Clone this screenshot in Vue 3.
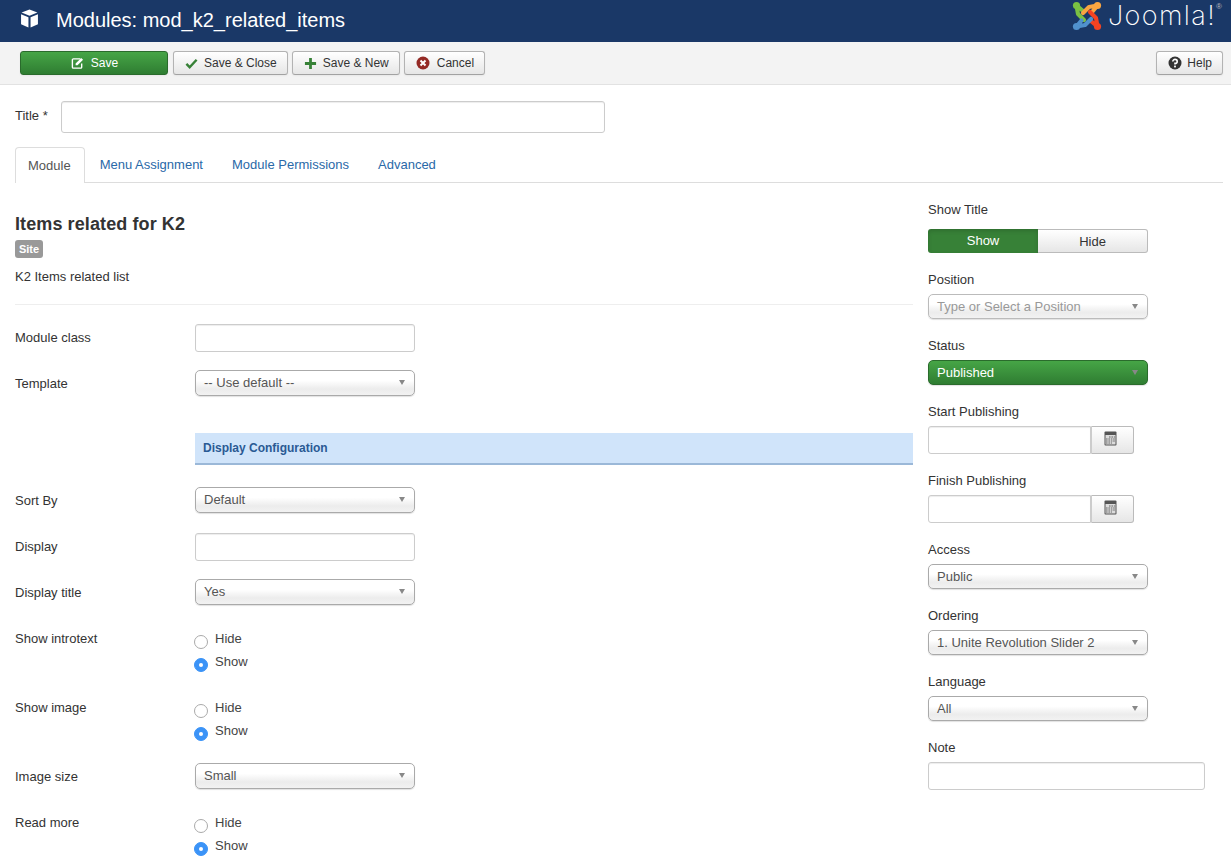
<template>
  <div class="page">
    <header class="topbar">
      <div class="topbar-title">
        <svg class="cube" viewBox="0 0 18 18" width="19" height="19">
          <path d="M9 0.5 L16.5 3.4 L9 6.4 L1.5 3.4 Z" fill="#fff" />
          <path d="M1 5 L8 7.8 V17.5 L1 14.4 Z" fill="#fff" />
          <path d="M17 5 L10 7.8 V17.5 L17 14.4 Z" fill="#fff" />
        </svg>
        <h1>Modules: mod_k2_related_items</h1>
      </div>
      <div class="logo">
        <svg viewBox="0 0 30 30" width="30" height="30" fill="none" stroke-linecap="round" stroke-linejoin="round">
          <g v-for="part in logoParts" :key="part.color" :transform="`rotate(${part.angle} 15 15)`">
            <path d="M4.5 4.5 L6 13 L12 19 M4.5 4.5 L10.5 9.5" :stroke="part.color" stroke-width="4.2" />
            <circle cx="4.5" cy="4.5" r="3.6" :fill="part.color" />
          </g>
        </svg>
        <span class="logo-word">Joomla!</span>
        <span class="logo-reg">®</span>
      </div>
    </header>

    <div class="toolbar">
      <div class="toolbar-left">
        <button class="btn btn-save">
          <svg viewBox="0 0 14 14" width="13" height="13">
            <path d="M10 2 H2.5 A1 1 0 0 0 1.5 3 V11 A1 1 0 0 0 2.5 12 H10.5 A1 1 0 0 0 11.5 11 V7" fill="none" stroke="#fff" stroke-width="1.5" />
            <path d="M5 7 L11 1 L13 3 L7 9 H5 Z" fill="#fff" />
          </svg>
          Save
        </button>
        <button class="btn">
          <svg viewBox="0 0 14 14" width="13" height="13">
            <path d="M1.5 7.5 L5 11 L12.5 3" fill="none" stroke="#378137" stroke-width="2.6" />
          </svg>
          Save &amp; Close
        </button>
        <button class="btn">
          <svg viewBox="0 0 14 14" width="13" height="13">
            <path d="M7 1 V13 M1 7 H13" fill="none" stroke="#378137" stroke-width="3" />
          </svg>
          Save &amp; New
        </button>
        <button class="btn btn-wide">
          <svg viewBox="0 0 14 14" width="14" height="14">
            <circle cx="7" cy="7" r="6.5" fill="#942a25" />
            <path d="M4.5 4.5 L9.5 9.5 M9.5 4.5 L4.5 9.5" stroke="#fff" stroke-width="2" />
          </svg>
          Cancel
        </button>
      </div>
      <button class="btn btn-help">
        <svg viewBox="0 0 14 14" width="14" height="14">
          <circle cx="7" cy="7" r="6.5" fill="#333" />
          <path d="M4.8 5.4 A2.2 2 0 1 1 7 7.4 V8.4" fill="none" stroke="#fff" stroke-width="1.6" />
          <rect x="6.1" y="9.6" width="1.8" height="1.8" fill="#fff" />
        </svg>
        Help
      </button>
    </div>

    <main class="content">
      <div class="title-row">
        <label>Title *</label>
        <input class="input title-input" type="text" />
      </div>

      <nav class="tabs">
        <a
          v-for="(tab, i) in tabs"
          :key="tab"
          class="tab"
          :class="{ active: i === 0 }"
        >{{ tab }}</a>
      </nav>

      <div class="columns">
        <section class="left">
          <h2>Items related for K2</h2>
          <span class="badge">Site</span>
          <p class="desc">K2 Items related list</p>
          <hr />

          <div class="row mb18">
            <label>Module class</label>
            <input class="input w220" type="text" />
          </div>
          <div class="row sel mb37">
            <label>Template</label>
            <div class="select w220">-- Use default --<i class="caret"></i></div>
          </div>

          <div class="row mb22">
            <span></span>
            <div class="section-bar">Display Configuration</div>
          </div>

          <div class="row sel mb20">
            <label>Sort By</label>
            <div class="select w220">Default<i class="caret"></i></div>
          </div>
          <div class="row mb18">
            <label>Display</label>
            <input class="input w220" type="text" />
          </div>
          <div class="row sel mb23">
            <label>Display title</label>
            <div class="select w220">Yes<i class="caret"></i></div>
          </div>

          <div class="row radio-row mb23">
            <label>Show introtext</label>
            <div class="radios">
              <div class="radio"><i class="dot"></i>Hide</div>
              <div class="radio"><i class="dot on"></i>Show</div>
            </div>
          </div>
          <div class="row radio-row mb20">
            <label>Show image</label>
            <div class="radios">
              <div class="radio"><i class="dot"></i>Hide</div>
              <div class="radio"><i class="dot on"></i>Show</div>
            </div>
          </div>
          <div class="row sel mb23">
            <label>Image size</label>
            <div class="select w220">Small<i class="caret"></i></div>
          </div>
          <div class="row radio-row">
            <label>Read more</label>
            <div class="radios">
              <div class="radio"><i class="dot"></i>Hide</div>
              <div class="radio"><i class="dot on"></i>Show</div>
            </div>
          </div>
        </section>

        <aside class="right">
          <div class="group first">
            <label>Show Title</label>
            <div class="toggle">
              <span class="toggle-on">Show</span>
              <span class="toggle-off">Hide</span>
            </div>
          </div>
          <div class="group">
            <label>Position</label>
            <div class="select placeholder">Type or Select a Position<i class="caret"></i></div>
          </div>
          <div class="group">
            <label>Status</label>
            <div class="select published">Published<i class="caret"></i></div>
          </div>
          <div class="group" v-for="name in dates" :key="name">
            <label>{{ name }}</label>
            <div class="date-field">
              <input class="input date-input" type="text" />
              <button class="date-btn">
                <svg viewBox="0 0 13 15" width="13" height="15">
                  <rect x="0.5" y="0.5" width="12" height="14" rx="1" fill="#555" />
                  <rect x="1.5" y="4" width="10" height="9.5" fill="#dcdcdc" />
                  <path d="M5 6 H11 M2 8 H11 M2 10 H11 M2 12 H8" stroke="#666" stroke-width="1" stroke-dasharray="1.6 0.8" />
                </svg>
              </button>
            </div>
          </div>
          <div class="group" v-for="item in selects" :key="item.label">
            <label>{{ item.label }}</label>
            <div class="select">{{ item.value }}<i class="caret"></i></div>
          </div>
          <div class="group">
            <label>Note</label>
            <input class="input note" type="text" />
          </div>
        </aside>
      </div>
    </main>
  </div>
</template>

<script setup>
const tabs = ['Module', 'Menu Assignment', 'Module Permissions', 'Advanced']
const dates = ['Start Publishing', 'Finish Publishing']
const selects = [
  { label: 'Access', value: 'Public' },
  { label: 'Ordering', value: '1. Unite Revolution Slider 2' },
  { label: 'Language', value: 'All' }
]
const logoParts = [
  { color: '#7ac143', angle: 0 },
  { color: '#f9a541', angle: 90 },
  { color: '#f44321', angle: 180 },
  { color: '#5091cd', angle: 270 }
]
</script>

<style>
html,
body {
  margin: 0;
  background: #fff;
}
</style>

<style scoped>
.page {
  height: 865px;
  overflow: hidden;
  font-family: "Liberation Sans", Arial, sans-serif;
  font-size: 13px;
  line-height: 18px;
  color: #333;
}

.topbar {
  height: 42px;
  background: #1a3867;
  display: flex;
  justify-content: space-between;
  color: #fff;
}

.topbar-title {
  display: flex;
  align-items: center;
  height: 40px;
  padding-left: 20px;
}

.cube {
  margin-top: -4px;
}

.topbar-title h1 {
  margin: 0 0 0 17px;
  font-size: 20px;
  font-weight: 400;
  line-height: 24px;
}

.logo {
  display: flex;
  align-items: flex-start;
  padding: 1px 9px 0 0;
}

.logo-word {
  margin-left: 6px;
  font-family: Inter, sans-serif;
  font-size: 27px;
  font-weight: 200;
  line-height: 30px;
  letter-spacing: 1.4px;
}

.logo-reg {
  font-size: 8px;
  line-height: 12px;
  color: #bbb;
}

.toolbar {
  height: 42px;
  background: #f3f3f3;
  border-bottom: 1px solid #e2e2e2;
  display: flex;
  justify-content: space-between;
  align-items: center;
  padding: 0 8px 0 20px;
}

.toolbar-left {
  display: flex;
  gap: 4px;
}

.btn {
  height: 24px;
  padding: 0 10px 0 11px;
  display: inline-flex;
  align-items: center;
  gap: 6px;
  font: inherit;
  font-size: 12px;
  color: #333;
  background: linear-gradient(#fff, #e6e6e6);
  border: 1px solid #b3b3b3;
  border-bottom-color: #a2a2a2;
  border-radius: 3px;
  box-shadow: 0 1px 2px rgba(0, 0, 0, 0.05);
}

.btn-wide {
  gap: 7px;
}

.btn-help {
  gap: 5px;
}

.btn-save {
  width: 148px;
  margin-right: 1px;
  justify-content: center;
  gap: 7px;
  color: #fff;
  background: linear-gradient(#46a546, #2f7d32);
  border-color: #2a6b2c;
}

.content {
  padding: 16px 8px 0 15px;
}

.title-row {
  display: flex;
  align-items: center;
}

.title-row label {
  width: 46px;
  padding-bottom: 2px;
}

.title-input {
  width: 544px;
  height: 32px;
}

.input {
  display: block;
  box-sizing: border-box;
  background: #fff;
  border: 1px solid #ccc;
  border-radius: 3px;
  box-shadow: inset 0 1px 1px rgba(0, 0, 0, 0.075);
  outline: none;
}

.tabs {
  display: flex;
  margin-top: 14px;
  height: 35px;
  border-bottom: 1px solid #ddd;
}

.tab {
  padding: 0 14px;
  margin-right: 1px;
  line-height: 35px;
  color: #2a69a8;
}

.tab.active {
  height: 36px;
  padding: 0 13px 0 12px;
  color: #555;
  background: #fff;
  border: 1px solid #ddd;
  border-bottom: none;
  border-radius: 4px 4px 0 0;
  box-sizing: border-box;
}

.columns {
  display: flex;
}

.left {
  width: 898px;
  padding-top: 30px;
}

h2 {
  margin: 0;
  font-size: 18px;
  line-height: 22px;
  font-weight: 700;
  letter-spacing: 0.1px;
}

.badge {
  display: block;
  width: 28px;
  height: 18px;
  margin-top: 5px;
  box-sizing: border-box;
  background: #999;
  color: #fff;
  border-radius: 3px;
  font-size: 11px;
  font-weight: 700;
  line-height: 18px;
  text-align: center;
}

.desc {
  margin: 10px 0 0;
}

hr {
  margin: 18px 0 19px;
  border: none;
  border-top: 1px solid #eee;
}

.row {
  display: grid;
  grid-template-columns: 180px 1fr;
  align-items: center;
}

.row.sel label {
  padding-top: 2px;
}

.radio-row {
  align-items: start;
}

.radio-row label {
  margin-top: 2px;
}

.mb18 { margin-bottom: 18px; }
.mb20 { margin-bottom: 20px; }
.mb22 { margin-bottom: 22px; }
.mb23 { margin-bottom: 23px; }
.mb37 { margin-bottom: 37px; }

.w220 {
  width: 220px;
}

.row .input {
  height: 28px;
}

.section-bar {
  height: 32px;
  box-sizing: border-box;
  padding-left: 8px;
  line-height: 30px;
  font-size: 12px;
  font-weight: 700;
  color: #2a5a94;
  background: #d0e4fa;
  border-bottom: 2px solid #9bb8d8;
}

.select {
  position: relative;
  box-sizing: border-box;
  height: 26px;
  padding-left: 8px;
  line-height: 23px;
  color: #555;
  background: linear-gradient(#fff 0%, #fff 40%, #ececec 75%, #f2f2f2 100%);
  border: 1px solid #aaa;
  border-radius: 5px;
  box-shadow: 0 1px 1px rgba(0, 0, 0, 0.12);
}

.caret {
  position: absolute;
  right: 9px;
  top: 9px;
  border-left: 3.5px solid transparent;
  border-right: 3.5px solid transparent;
  border-top: 5px solid #888;
}

.radio {
  display: flex;
  height: 23px;
  line-height: 22px;
  color: #444;
}

.dot {
  box-sizing: border-box;
  width: 14px;
  height: 14px;
  margin: 7px 7px 0 -1px;
  border-radius: 50%;
  background: #fff;
  border: 1px solid #aaa;
  position: relative;
}

.dot.on {
  background: #3b93f7;
  border-color: #3b93f7;
}

.dot.on::after {
  content: "";
  position: absolute;
  left: 4px;
  top: 4px;
  width: 4px;
  height: 4px;
  border-radius: 50%;
  background: #fff;
}

.right {
  width: 295px;
  margin-left: 15px;
  padding-top: 17px;
}

.group {
  margin-bottom: 17px;
}

.group label {
  display: block;
  padding-top: 1px;
  margin-bottom: 5px;
}

.group.first label {
  margin-bottom: 10px;
}

.group .select {
  width: 220px;
  height: 25px;
}

.toggle {
  display: flex;
  width: 220px;
  height: 24px;
  line-height: 23px;
  text-align: center;
}

.toggle-on {
  width: 110px;
  color: #fff;
  background: #378137;
  border-radius: 3px 0 0 3px;
  box-shadow: inset 0 2px 4px rgba(0, 0, 0, 0.15);
}

.toggle-off {
  width: 110px;
  box-sizing: border-box;
  background: linear-gradient(#fff, #e6e6e6);
  border: 1px solid #bbb;
  border-left: none;
  border-radius: 0 3px 3px 0;
}

.group .placeholder {
  color: #999;
  border-color: #bbb;
}

.group .published {
  color: #fff;
  background: linear-gradient(#46a546, #2f7d32);
  border-color: #2a6b2c;
}

.date-field {
  display: flex;
}

.date-input {
  width: 163px;
  height: 28px;
  border-radius: 3px 0 0 3px;
}

.date-btn {
  width: 43px;
  height: 28px;
  padding: 0 4px 0 0;
  background: linear-gradient(#fff, #e6e6e6);
  border: 1px solid #bbb;
  border-left-color: #ccc;
  border-radius: 0 3px 3px 0;
}

.note {
  width: 277px;
  height: 28px;
}
</style>
